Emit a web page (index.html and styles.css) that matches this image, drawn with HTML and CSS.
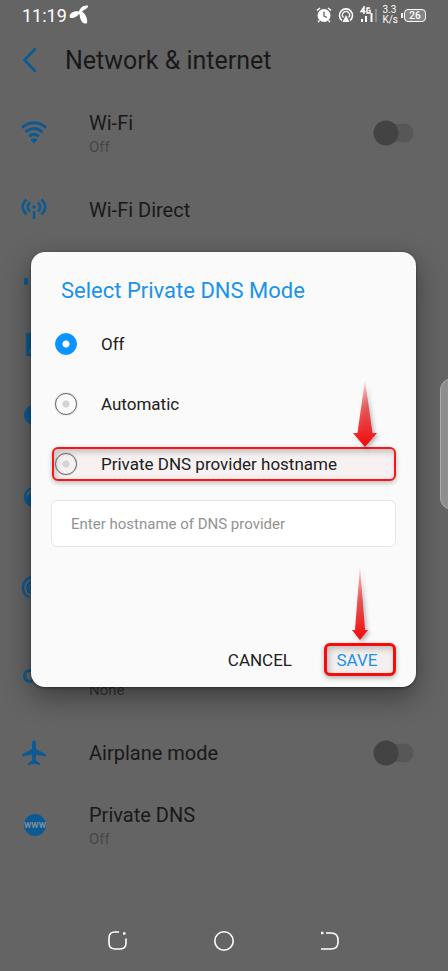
FILE: index.html
```html
<!DOCTYPE html>
<html lang="en">
<head>
<meta charset="utf-8">
<meta name="viewport" content="width=device-width, initial-scale=1">
<title>Network &amp; internet</title>
<link rel="stylesheet" href="styles.css">
</head>
<body>
<div class="screen">
  <div class="status">
    <span class="clock">11:19</span>
    <svg class="carrier" width="20" height="20" viewBox="0 0 20 20" fill="#fff"><path d="M10 6.500C11 3 14 0 19 .6c.5 2.400-3 4-6 5.800 3 2 6 7 5 11.500-2.500 1.500-5.500-.5-6.500-4-.7-2-.8-3.600-1-5C8 11 4 14.500.8 12.500-.5 8.500 5 5 10 6.500z"/></svg>
    <div class="indicators">
      <svg width="16" height="16" viewBox="0 0 16 16"><circle cx="8" cy="8.500" r="6.500" fill="#fff"/><path d="M1 3.500L4 1M15 3.500L12 1M3.500 13.500L2 15M12.500 13.500L14 15" stroke="#fff" stroke-width="1.600"/><path d="M8 4.500V9l3 1.500" fill="none" stroke="#646464" stroke-width="1.300"/></svg>
      <svg width="16" height="16" viewBox="0 0 16 16" fill="none" stroke="#fff" stroke-width="1.600"><path d="M4 13.500A6.500 6.500 0 1 1 12 13.500"/><path d="M5.500 10.500A3.500 3.500 0 1 1 10.500 10.500" stroke-width="1.300"/><path d="M8 8l3.500 7h-7z" fill="#fff" stroke="none"/></svg>
      <svg width="18" height="18" viewBox="0 0 18 18"><g fill="none" stroke="#fff" stroke-width="1.500"><path d="M4 8V1L1 5.500H5.500M10 2H7v5h3V4.500H8.500"/></g><path d="M1 13h2v3H1zM5 10h2v6H5zM10.500 7h2v9h-2z" fill="#fff"/><path d="M15 3h2v13h-2z" fill="#8c8c8c"/></svg>
      <span class="speed">3.3<br>K/s</span>
      <span class="battery">26</span>
    </div>
  </div>

  <header class="header">
    <button class="back" aria-label="Back"><svg width="16" height="26" viewBox="0 0 16 26"><path d="M13 2L2.500 13 13 24" fill="none" stroke="#0d5a92" stroke-width="2.600" stroke-linecap="round"/></svg></button>
    <h1>Network &amp; internet</h1>
  </header>

  <main class="list">
    <div class="row double">
      <svg class="icon" viewBox="0 0 26 26" fill="none" stroke="#0d5a92" stroke-width="3"><path d="M1 7.500Q13-2 25 7.500M4.500 12q8.500-7 17 0M8.200 16.400q4.800-4 9.600 0"/><path d="M9.500 19.500q3.500-2.500 7 0L13 23.500z" fill="#0d5a92" stroke="none"/></svg>
      <label class="text" for="wifi"><span class="name">Wi-Fi</span><span class="sub">Off</span></label>
      <input class="switch" type="checkbox" id="wifi">
    </div>
    <div class="row">
      <svg class="icon" viewBox="0 0 26 26" fill="none" stroke="#0d5a92" stroke-width="2.500"><path d="M5.500 2.500C.5 7 .5 13 5.500 17.500M20.500 2.500c5 4.500 5 10.500 0 15M9 5.500c-3 3-3 6 0 9M17 5.500c3 3 3 6 0 9M13 14v8"/><circle cx="13" cy="10" r="1.800" fill="#0d5a92" stroke="none"/></svg>
      <div class="text"><span class="name">Wi-Fi Direct</span></div>
    </div>
    <div class="row">
      <svg class="icon" viewBox="0 0 26 26" fill="#0d5a92"><path d="M3 9h4v7H3zM12 6h4v10h-4zM19 2h4v14h-4z"/></svg>
    </div>
    <div class="row compact">
      <svg class="icon" viewBox="0 0 26 26"><path d="M6 0h12l5 5v18H6q-1 0-1-1V1q0-1 1-1z" fill="#0d5a92"/><path d="M8 17h10v3H8z" fill="#4d6372"/></svg>
    </div>
    <div class="row double">
      <svg class="icon" viewBox="0 0 26 26"><circle cx="13" cy="13" r="10" fill="#0d5a92"/></svg>
    </div>
    <div class="row double">
      <svg class="icon" viewBox="0 0 26 26"><circle cx="13" cy="13" r="9" fill="none" stroke="#0d5a92" stroke-width="2.500"/><path d="M4 16Q7 8 13 9v14Q6 22 4 16z" fill="#0d5a92"/></svg>
    </div>
    <div class="row tall">
      <svg class="icon" viewBox="0 0 26 26" fill="none" stroke="#0d5a92" stroke-width="2.500"><path d="M8 23.500a11 11 0 1 1 10 0M9 19a6.500 6.500 0 1 1 8 0"/><circle cx="13" cy="14" r="3" fill="#0d5a92"/></svg>
    </div>
    <div class="row double">
      <svg class="icon" viewBox="0 0 26 26" fill="none" stroke="#0d5a92" stroke-width="3"><circle cx="9" cy="13" r="5.500"/><path d="M14 13h11v5"/></svg>
      <div class="text"><span class="name">VPN</span><span class="sub dark">None</span></div>
    </div>
    <div class="row">
      <svg class="icon" viewBox="0 0 26 26" fill="#0d5a92"><path d="M13 .5c1.500 0 2 1.500 2 3V9l9.500 5q.8 1.500 0 2.500L15 14.500 14.700 20l4.300 3.500V25l-6-1-6 1v-1.500L11.300 20 11 14.500l-9.500 2q-.8-1 0-2.500L11 9V3.500c0-1.500.5-3 2-3z"/></svg>
      <label class="text" for="airplane"><span class="name">Airplane mode</span></label>
      <input class="switch" type="checkbox" id="airplane">
    </div>
    <div class="row">
      <span class="www">www</span>
      <div class="text"><span class="name">Private DNS</span><span class="sub">Off</span></div>
    </div>
  </main>

  <nav class="nav">
    <button aria-label="Recent apps"><svg width="22" height="22" viewBox="0 0 22 22" fill="none" stroke="#fff" stroke-width="1.600"><path d="M12 2H8Q2 2 2 8v5q0 6 6 6h5q6 0 6-6V8.500"/><path d="M16 3.500h2.500" stroke-width="2.400"/></svg></button>
    <button aria-label="Home"><svg width="22" height="22" viewBox="0 0 22 22" fill="none" stroke="#fff" stroke-width="1.600"><circle cx="11" cy="11" r="9.200"/></svg></button>
    <button aria-label="Back"><svg width="22" height="22" viewBox="0 0 22 22" fill="none" stroke="#fff" stroke-width="1.600"><path d="M7 3h5q7 0 7 7v2q0 7-7 7H2"/><path d="M2 3h2.400" stroke-width="2.400"/></svg></button>
  </nav>

  <div class="edge"></div>

  <div class="overlay">
    <form class="dialog" role="dialog" aria-labelledby="title">
      <h2 id="title">Select Private DNS Mode</h2>
      <label class="option"><input type="radio" name="mode" checked>Off</label>
      <label class="option"><input type="radio" name="mode">Automatic</label>
      <label class="option marked"><input type="radio" name="mode">Private DNS provider hostname
        <svg class="arrow" width="32" height="72" viewBox="0 0 32 72"><defs><linearGradient id="fade" x1="0" y1="0" x2="0" y2="1"><stop offset="0" stop-color="#f01010" stop-opacity="0.1"/><stop offset=".45" stop-color="#e83535" stop-opacity=".8"/><stop offset="1" stop-color="#f50808"/></linearGradient></defs><path d="M14 1l7.500 53H26L14 68 2 54h4.500z" fill="url(#fade)"/></svg>
      </label>
      <input class="host" type="text" aria-label="Hostname" placeholder="Enter hostname of DNS provider">
      <div class="actions">
        <button class="cancel" type="button">CANCEL</button>
        <button class="save" type="button">SAVE
          <svg class="arrow" width="32" height="80" viewBox="0 0 32 80"><path d="M14 2l5 64h3l-8 10-8-10h3z" fill="url(#fade)"/></svg>
        </button>
      </div>
    </form>
  </div>
</div>
</body>
</html>
```
FILE: styles.css
```css
* { box-sizing: border-box; }
body { margin: 0; background: #646464; color: #191919; font-family: Roboto, sans-serif; }
button { margin: 0; padding: 0; border: 0; background: none; font: inherit; color: inherit; }
svg { display: block; flex: none; }
h1, h2 { margin: 0; font-weight: 400; }

.screen { position: relative; min-height: 100vh; display: flex; flex-direction: column; overflow: hidden; }

.status { display: flex; align-items: center; height: 30px; padding: 0 22px; color: #fff; }
.clock { font-size: 18px; }
.carrier { margin-left: 2px; }
.indicators { display: flex; align-items: center; gap: 6px; margin-left: auto; }
.speed { font-size: 10px; line-height: 10px; margin-left: -2px; }
.battery { position: relative; width: 22px; height: 13px; border: 1px solid #fff; border-radius: 4px; background: #858585; font-size: 10px; font-weight: 500; line-height: 11px; text-align: center; }
.battery::before { content: ""; position: absolute; left: -4px; top: 3px; width: 2px; height: 5px; background: #fff; }

.header { display: flex; align-items: center; gap: 27px; height: 60px; padding: 0 22px; }
.header h1 { font-size: 25px; }

.list { flex: 1; padding: 2px 34px 0 21px; }
.row { display: flex; align-items: center; height: 72px; }
.row.double { height: 82px; }
.row.compact { height: 56px; }
.row.tall { height: 97px; }
.icon { width: 26px; height: 26px; margin-right: 42px; }
.text { display: flex; flex-direction: column; flex: 1; gap: 1px; }
.name { font-size: 20px; line-height: 26px; }
.sub { font-size: 15px; line-height: 20px; color: #474747; }
.sub.dark { color: #333; }
.www { display: flex; justify-content: center; width: 22px; height: 22px; margin: 0 43px 0 3px; border-radius: 50%; background: #0d5a92; color: #7d8c98; font-size: 10px; font-weight: 700; line-height: 21px; }
.switch { appearance: none; margin: 0; width: 41px; height: 26px; background: radial-gradient(circle at 13px 13px, #434343 12px, transparent 13px), linear-gradient(#575757, #575757) 12px 4px / 17px 18px no-repeat, radial-gradient(circle at 31px 13px, #575757 9px, transparent 10px); }

.nav { display: flex; justify-content: space-around; align-items: center; height: 60px; padding: 0 65px; }

.edge { position: absolute; right: -16px; top: 378px; width: 24px; height: 132px; border: 1px solid #adadad; border-radius: 12px; background: #8f8f8f; }

.overlay { position: absolute; inset: 0 0 32px; display: flex; align-items: center; padding: 0 32px 0 31px; }
.dialog { width: 100%; padding: 24px 20px 11px; border-radius: 14px; background: #fafafa; box-shadow: 0 10px 28px rgba(0, 0, 0, .4), 0 1px 3px rgba(0, 0, 0, .4); }
.dialog h2 { margin: 0 10px 8px; color: #1c92e8; font-size: 22px; line-height: 30px; }
.option { position: relative; display: flex; align-items: center; gap: 24px; height: 60px; padding-left: 4px; font-size: 17px; color: #202020; }
.option input { appearance: none; flex: none; width: 22px; height: 22px; margin: 0; border: 1px solid #666; border-radius: 50%; background: radial-gradient(circle, #d3d3d3 3px, transparent 4px); box-shadow: 0 0 1px #777; }
.option input:checked { border-color: #0b93ff; background: radial-gradient(circle, #fff 3px, #0b93ff 4px); box-shadow: none; }
.option.marked { height: 34px; margin: 13px 0 19px 1px; padding-left: 1px; border: 2px solid #fa1515; border-radius: 6px; background: #f7f2f1; box-shadow: 0 2px 5px rgba(0, 0, 0, .25), inset 2px 3px 6px rgba(0, 0, 0, .22); }
.arrow { position: absolute; filter: drop-shadow(2px 2px 2px rgba(0, 0, 0, .3)); }
.marked .arrow { right: 11px; bottom: 28px; }
.host { display: block; width: 100%; height: 47px; padding: 0 19px; border: 1px solid #e6e6e6; border-radius: 6px; background: #fff; font: 15px Roboto, sans-serif; }
.host::placeholder { color: #929292; opacity: 1; }
.actions { display: flex; justify-content: flex-end; align-items: center; gap: 32px; margin-top: 96px; font-size: 17px; color: #202020; }
.save { position: relative; width: 72px; height: 33px; padding-right: 6px; border: 3px solid #fa0a0a; border-radius: 6px; background: #f4f0f0; color: #1c92e8; box-shadow: 0 2px 5px rgba(0, 0, 0, .3), inset 2px 3px 6px rgba(0, 0, 0, .22); }
.save .arrow { right: 15px; bottom: 29px; }
```
